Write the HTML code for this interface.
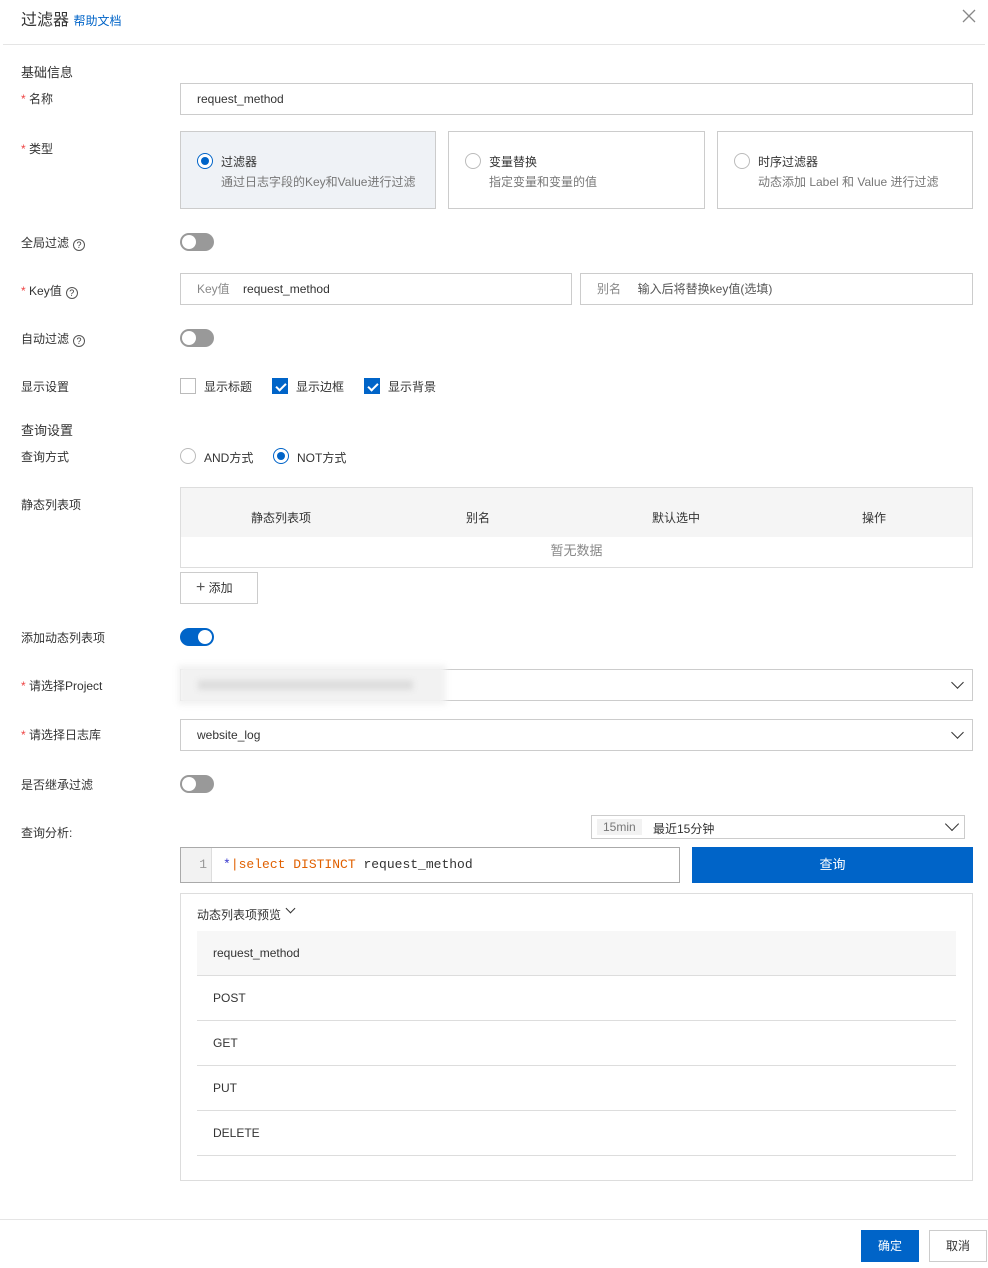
<!DOCTYPE html><html><head><meta charset="utf-8"><style>
*{box-sizing:border-box;margin:0;padding:0}
body{width:988px;height:1268px;background:#fff;font-family:"Liberation Sans","Noto Sans CJK SC",sans-serif;font-size:12px;color:#333;position:relative;overflow:hidden}
.a{position:absolute}
.lbl{position:absolute;left:21px;font-size:12px;color:#333}
.req:before{content:"* ";color:#e44}
.inp{position:absolute;border:1px solid #ccc;background:#fff;height:32px;line-height:30px;padding-left:16px;font-size:12px;color:#333}
.sw{position:absolute;left:180px;width:34px;height:18px;border-radius:9px;background:#999}
.sw:after{content:"";position:absolute;left:2px;top:2px;width:14px;height:14px;border-radius:7px;background:#fff}
.sw.on{background:#0064c8}.sw.on:after{left:18px}
.q{display:inline-block;width:12px;height:12px;border:1px solid #555;border-radius:50%;font-size:9px;line-height:10px;text-align:center;margin-left:4px;vertical-align:-1px}
.rad{position:absolute;width:16px;height:16px;border:1px solid #bbb;border-radius:50%;background:#fff}
.rad.on{border-color:#0064c8}.rad.on:after{content:"";position:absolute;left:3px;top:3px;width:8px;height:8px;border-radius:50%;background:#0064c8}
.cb{position:absolute;width:16px;height:16px;border:1px solid #bbb;background:#fff}
.cb.on{background:#0064c8;border-color:#0064c8}
.cb.on:after{content:"";position:absolute;left:5px;top:2px;width:4px;height:8px;border:solid #fff;border-width:0 2px 2px 0;transform:rotate(45deg)}
.card{position:absolute;top:131px;height:78px;border:1px solid #ccc;width:257px}
.card .t{position:absolute;left:40px;top:21px;color:#333}
.card .d{position:absolute;left:40px;top:41px;color:#777}
.card .rad{left:16px;top:21px}
.chev{position:absolute;width:9px;height:9px;border:solid #333;border-width:0 1px 1px 0;transform:rotate(45deg)}
.row{position:absolute;left:197px;width:759px;height:45px;border-bottom:1px solid #ddd;line-height:45px;padding-left:16px;color:#333}
</style></head><body>
<div class="a" style="left:21px;top:6px;font-size:16px;color:#333">过滤器 <span style="font-size:12px;color:#0064c8">帮助文档</span></div>
<svg class="a" style="left:962px;top:9px" width="14" height="14"><path d="M1 1L13 13M13 1L1 13" stroke="#888" stroke-width="1.3"/></svg>
<div class="a" style="left:3px;top:44px;width:982px;height:1px;background:#e5e5e5"></div>

<div class="a" style="left:21px;top:62px;font-size:13px">基础信息</div>
<div class="lbl req" style="top:90px">名称</div>
<div class="inp" style="left:180px;top:83px;width:793px">request_method</div>
<div class="lbl req" style="top:140px">类型</div>
<div class="card" style="left:180px;background:#eff2f6;width:256px"><div class="rad on"></div><div class="t">过滤器</div><div class="d">通过日志字段的Key和Value进行过滤</div></div>
<div class="card" style="left:448px"><div class="rad"></div><div class="t">变量替换</div><div class="d">指定变量和变量的值</div></div>
<div class="card" style="left:717px;width:256px"><div class="rad"></div><div class="t">时序过滤器</div><div class="d">动态添加 Label 和 Value 进行过滤</div></div>

<div class="lbl" style="top:234px">全局过滤<span class="q">?</span></div>
<div class="sw" style="top:233px"></div>
<div class="lbl req" style="top:282px">Key值<span class="q">?</span></div>
<div class="inp" style="left:180px;top:273px;width:392px"><span style="color:#888">Key值</span>&nbsp;&nbsp;&nbsp;&nbsp;request_method</div>
<div class="inp" style="left:580px;top:273px;width:393px;color:#888">别名&nbsp;&nbsp;&nbsp;&nbsp;&nbsp;<span style="color:#555">输入后将替换key值(选填)</span></div>
<div class="lbl" style="top:330px">自动过滤<span class="q">?</span></div>
<div class="sw" style="top:329px"></div>
<div class="lbl" style="top:378px">显示设置</div>
<div class="cb" style="left:180px;top:378px"></div><div class="a" style="left:204px;top:378px">显示标题</div>
<div class="cb on" style="left:272px;top:378px"></div><div class="a" style="left:296px;top:378px">显示边框</div>
<div class="cb on" style="left:364px;top:378px"></div><div class="a" style="left:388px;top:378px">显示背景</div>

<div class="a" style="left:21px;top:420px;font-size:13px">查询设置</div>
<div class="lbl" style="top:448px">查询方式</div>
<div class="rad" style="left:180px;top:448px"></div><div class="a" style="left:204px;top:449px">AND方式</div>
<div class="rad on" style="left:273px;top:448px"></div><div class="a" style="left:297px;top:449px">NOT方式</div>

<div class="lbl" style="top:496px">静态列表项</div>
<div class="a" style="left:180px;top:487px;width:793px;height:81px;border:1px solid #ddd">
<div style="height:49px;background:#f5f5f5;position:relative">
<span class="a" style="left:70px;top:21px">静态列表项</span><span class="a" style="left:285px;top:21px">别名</span><span class="a" style="left:471px;top:21px">默认选中</span><span class="a" style="left:681px;top:21px">操作</span></div>
<div style="text-align:center;color:#888;padding-top:3px;font-size:13px">暂无数据</div></div>
<div class="a" style="left:180px;top:572px;width:78px;height:32px;border:1px solid #ccc;line-height:30px;padding-left:15px"><span style="font-size:16px;color:#555">+</span> 添加</div>

<div class="lbl" style="top:629px">添加动态列表项</div>
<div class="sw on" style="top:628px"></div>
<div class="lbl req" style="top:677px">请选择Project</div>
<div class="inp" style="left:180px;top:669px;width:793px"></div>
<div class="a" style="left:178px;top:665px;width:268px;height:40px;background:#f2f2f2;filter:blur(3px)"></div>
<div class="a" style="left:198px;top:680px;width:215px;height:10px;background:#ddd;filter:blur(3px)"></div>
<div class="chev" style="left:953px;top:678px"></div>
<div class="lbl req" style="top:726px">请选择日志库</div>
<div class="inp" style="left:180px;top:719px;width:793px">website_log</div>
<div class="chev" style="left:953px;top:728px"></div>
<div class="lbl" style="top:776px">是否继承过滤</div>
<div class="sw" style="top:775px"></div>

<div class="lbl" style="top:824px">查询分析:</div>
<div class="a" style="left:591px;top:815px;width:374px;height:24px;border:1px solid #ccc"><span class="a" style="left:5px;top:3px;background:#f2f2f2;color:#777;padding:1px 6px">15min</span><span class="a" style="left:61px;top:4px">最近15分钟</span><div class="chev" style="left:355px;top:3px;width:10px;height:10px;border-width:0 1.5px 1.5px 0"></div></div>
<div class="a" style="left:180px;top:847px;width:500px;height:36px;border:1px solid #aaa;font-family:'Liberation Mono',monospace;font-size:13px">
<div style="position:absolute;left:0;top:0;width:31px;height:34px;background:#f2f2f2;border-right:1px solid #ddd;text-align:right;padding-right:4px;line-height:34px;color:#999">1</div>
<div style="position:absolute;left:42px;line-height:34px"><span style="color:#33c">*</span><span style="color:#e06000">|select DISTINCT</span> request_method</div></div>
<div class="a" style="left:692px;top:847px;width:281px;height:36px;background:#0064c8;color:#fff;text-align:center;line-height:36px;font-size:13px">查询</div>

<div class="a" style="left:180px;top:893px;width:793px;height:288px;border:1px solid #ddd"></div>
<div class="a" style="left:197px;top:906px">动态列表项预览</div><div class="chev" style="left:287px;top:905px;width:7px;height:7px;border-width:0 1.5px 1.5px 0"></div>
<div class="row" style="top:931px;background:#f7f7f7">request_method</div>
<div class="row" style="top:976px">POST</div>
<div class="row" style="top:1021px">GET</div>
<div class="row" style="top:1066px">PUT</div>
<div class="row" style="top:1111px">DELETE</div>

<div class="a" style="left:0;top:1219px;width:988px;height:1px;background:#e5e5e5"></div>
<div class="a" style="left:861px;top:1230px;width:58px;height:32px;background:#0064c8;color:#fff;text-align:center;line-height:32px">确定</div>
<div class="a" style="left:929px;top:1230px;width:58px;height:32px;border:1px solid #ccc;text-align:center;line-height:30px">取消</div>
</body></html>
